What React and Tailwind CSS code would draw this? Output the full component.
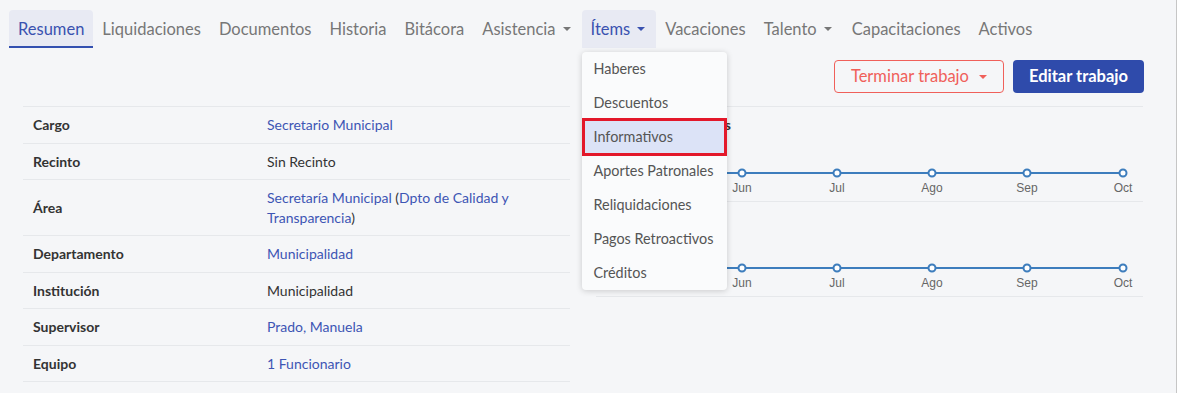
const tabs = [
  { label: 'Resumen', active: true },
  { label: 'Liquidaciones' },
  { label: 'Documentos' },
  { label: 'Historia' },
  { label: 'Bitácora' },
  { label: 'Asistencia', caret: true },
  { label: 'Ítems', caret: true, open: true },
  { label: 'Vacaciones' },
  { label: 'Talento', caret: true },
  { label: 'Capacitaciones' },
  { label: 'Activos' },
];

const menu = ['Haberes', 'Descuentos', 'Informativos', 'Aportes Patronales', 'Reliquidaciones', 'Pagos Retroactivos', 'Créditos'];

const rows = [
  { label: 'Cargo', value: <a className="text-[#3d55b4]">Secretario Municipal</a> },
  { label: 'Recinto', value: 'Sin Recinto' },
  {
    label: 'Área',
    value: (
      <>
        <a className="text-[#3d55b4]">Secretaría Municipal</a> (<a className="text-[#3d55b4]">Dpto de Calidad y Transparencia</a>)
      </>
    ),
  },
  { label: 'Departamento', value: <a className="text-[#3d55b4]">Municipalidad</a> },
  { label: 'Institución', value: 'Municipalidad' },
  { label: 'Supervisor', value: <a className="text-[#3d55b4]">Prado, Manuela</a> },
  { label: 'Equipo', value: <a className="text-[#3d55b4]">1 Funcionario</a> },
];

const months = ['May', 'Jun', 'Jul', 'Ago', 'Sep', 'Oct'];

function Caret({ className = '' }) {
  return <span className={`inline-block w-0 h-0 border-x-[4px] border-x-transparent border-t-[4px] ${className}`} />;
}

function Chart({ title }) {
  const xs = [51, 146, 241, 336, 431, 527];
  return (
    <div className="h-[95px] border-b border-[#e6e8eb] relative">
      <div className="pt-[8px] pl-[12px] text-[14px] font-bold text-[#333] leading-5">{title}</div>
      <svg width="547" height="70" className="absolute left-0 top-[55px]">
        <polyline points={xs.map((x) => `${x},11`).join(' ')} fill="none" stroke="#3d7dbd" strokeWidth="2" />
        {xs.map((x, i) => (
          <g key={x}>
            <circle cx={x} cy="11" r="3.5" fill="#fff" stroke="#3d7dbd" strokeWidth="2" />
            <text x={x} y="30" textAnchor="middle" fontSize="12" fill="#666" fontFamily="Liberation Sans, Arial, sans-serif">{months[i]}</text>
          </g>
        ))}
      </svg>
    </div>
  );
}

export default function App() {
  return (
    <div className="w-[1177px] h-[393px] overflow-hidden bg-[#f5f6f8] border-r border-[#c6c6c6] font-['Lato',sans-serif] relative">
      {/* Tabs */}
      <nav className="flex items-end pl-[9px] pt-[10px]">
        {tabs.map((t) => (
          <div
            key={t.label}
            className={`relative h-[38px] flex items-center pt-[2px] pl-[9px] text-[16.5px] rounded-t-[4px] border-b-2 ${t.caret ? 'pr-[11px]' : 'pr-[9px]'} ${
              t.active
                ? 'bg-[#e8eaf3] text-[#3a52b0] border-[#3350b0]'
                : t.open
                ? 'bg-[#e8eaf3] text-[#3a52b0] border-transparent'
                : 'text-[#777] border-transparent'
            }`}
          >
            {t.label}
            {t.caret && <Caret className={`ml-[7px] ${t.open ? 'border-t-[#3a52b0]' : 'border-t-[#777]'}`} />}
            {t.open && (
              <div className="absolute left-0 top-[42px] z-10 w-[145px] bg-[#fafbfc] rounded-[4px] shadow-[0_1px_6px_rgba(0,0,0,0.18)]">
                {menu.map((m) => (
                  <div
                    key={m}
                    className={`relative h-[34px] flex items-center px-[12px] text-[14.4px] text-[#555] ${m === 'Informativos' ? 'bg-[#dce3f7]' : ''}`}
                  >
                    {m}
                    {m === 'Informativos' && <div className="absolute inset-x-0 -top-[2px] -bottom-[2px] border-[3px] border-[#e3182a]" />}
                  </div>
                ))}
              </div>
            )}
          </div>
        ))}
      </nav>

      {/* Actions */}
      <div className="flex justify-end gap-[9px] pr-[32px] mt-[12px]">
        <button className="h-[33px] px-[16px] flex items-center gap-[10px] rounded-[4px] border border-[#f0605a] text-[#f0605a] text-[16.5px]">
          Terminar trabajo
          <Caret className="border-t-[#f0605a]" />
        </button>
        <button className="h-[33px] px-[16px] rounded-[4px] bg-[#2f4bab] text-white text-[16.5px] font-bold">Editar trabajo</button>
      </div>

      {/* Content */}
      <div className="grid grid-cols-2 gap-[26px] pl-[23px] pr-[33px] mt-[13px]">
        <div className="border-t border-[#e6e8eb]">
          {rows.map((r) => (
            <div key={r.label} className="flex items-center border-b border-[#e6e8eb] py-2 text-[14px] leading-[19.5px]">
              <div className="w-[234px] pl-[10px] font-bold text-[#333]">{r.label}</div>
              <div className="flex-1 pl-[10px] pr-[40px] text-[#333]">{r.value}</div>
            </div>
          ))}
        </div>
        <div className="border-t border-[#e6e8eb]">
          <Chart title="Haberes imponibles" />
          <Chart title="" />
        </div>
      </div>
    </div>
  );
}
